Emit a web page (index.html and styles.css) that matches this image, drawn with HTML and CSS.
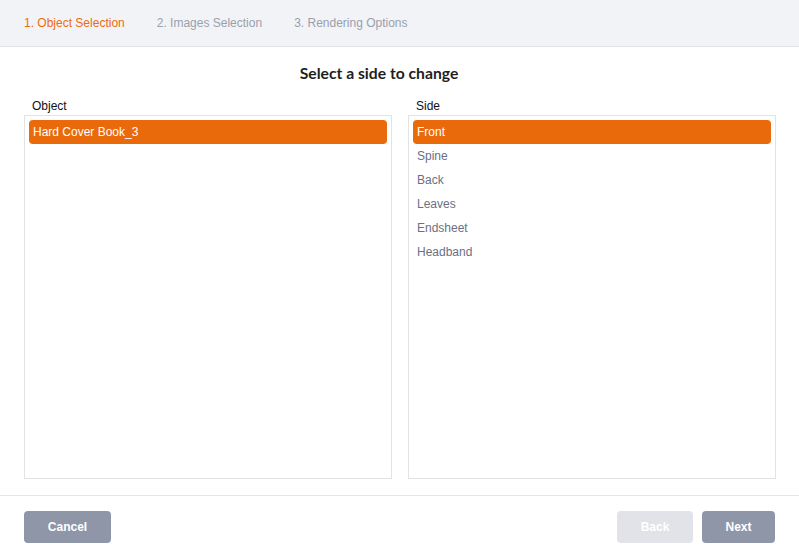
FILE: index.html
```html
<!DOCTYPE html>
<html lang="en">
<head>
    <meta charset="UTF-8">
    <title>Object Selection</title>
    <link rel="stylesheet" href="styles.css">
</head>
<body>
    <div class="steps">
        <span class="step active">1. Object Selection</span>
        <span class="step">2. Images Selection</span>
        <span class="step">3. Rendering Options</span>
    </div>

    <div class="main">
        <h1>Select a side to change</h1>
        <div class="panels">
            <div class="panel">
                <div class="panel-label">Object</div>
                <ul class="list">
                    <li class="selected">Hard Cover Book_3</li>
                </ul>
            </div>
            <div class="panel">
                <div class="panel-label">Side</div>
                <ul class="list">
                    <li class="selected">Front</li>
                    <li>Spine</li>
                    <li>Back</li>
                    <li>Leaves</li>
                    <li>Endsheet</li>
                    <li>Headband</li>
                </ul>
            </div>
        </div>
    </div>

    <div class="footer">
        <button class="btn btn-cancel">Cancel</button>
        <div class="nav-buttons">
            <button class="btn btn-back">Back</button>
            <button class="btn btn-next">Next</button>
        </div>
    </div>
</body>
</html>
```

FILE: styles.css
```css
body {
    margin: 0;
    font-family: "Liberation Sans", Arial, sans-serif;
    font-size: 12px;
    color: #222;
    background: #fff;
}

.steps {
    display: flex;
    gap: 32px;
    height: 46px;
    padding-left: 24px;
    line-height: 46px;
    background: #f2f3f6;
    border-bottom: 1px solid #e1e2e6;
}

.step {
    color: #9a9fad;
}

    .step.active {
        color: #ea6d10;
    }

.main {
    padding: 16px 23px 16px 24px;
    border-bottom: 1px solid #e4e5e8;
}

h1 {
    margin: 0 0 14px;
    padding-right: 42px;
    font-family: "Lato", sans-serif;
    font-size: 15.7px;
    line-height: 20px;
    font-weight: 700;
    text-align: center;
    color: #1e1e1e;
}

.panels {
    display: grid;
    grid-template-columns: 1fr 1fr;
    gap: 16px;
}

.panel-label {
    padding-left: 8px;
    line-height: 16px;
    margin-top: 1px;
    margin-bottom: 1px;
    color: #111;
}

.list {
    list-style: none;
    margin: 0;
    padding: 4px;
    height: 354px;
    border: 1px solid #e2e3e6;
}

    .list li {
        height: 24px;
        line-height: 24px;
        padding-left: 4px;
        border-radius: 4px;
        color: #6a7084;
    }

    .list li.selected {
        background: #e96a0a;
        color: #fff;
    }

.footer {
    display: flex;
    justify-content: space-between;
    padding: 15px 24px 0 24px;
}

.nav-buttons {
    display: flex;
    gap: 9px;
}

.btn {
    height: 32px;
    border: none;
    border-radius: 4px;
    font-family: "Liberation Sans", Arial, sans-serif;
    font-size: 12px;
    font-weight: 700;
    color: #fff;
    background: #8f96a7;
}

.btn-cancel {
    width: 87px;
}

.btn-back {
    width: 76px;
    background: #e1e3e8;
}

.btn-next {
    width: 73px;
}
```
